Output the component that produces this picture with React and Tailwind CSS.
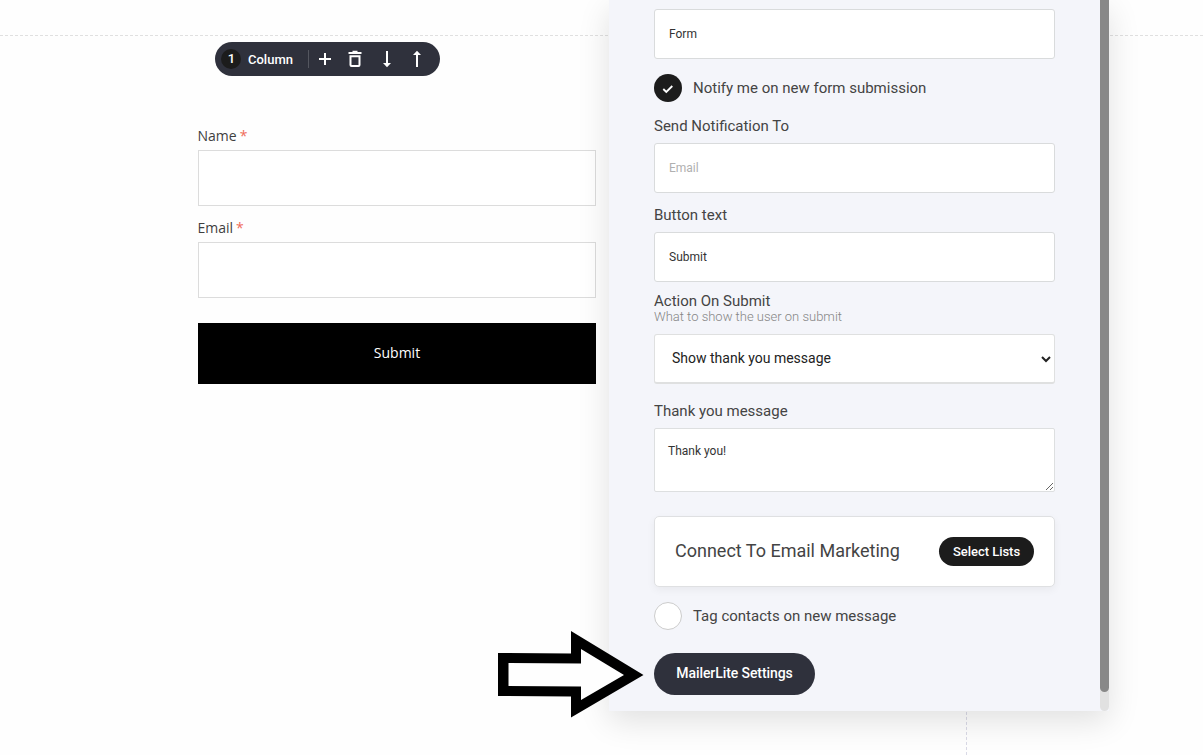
import React from "react";

function AddIcon() {
  return (
    <svg viewBox="0 0 22 22" className="size-[22px] shrink-0" fill="none" stroke="currentColor" strokeWidth="2">
      <path d="M11 5v12M5 11h12" />
    </svg>
  );
}

function TrashIcon() {
  return (
    <svg viewBox="0 0 22 22" className="size-[22px] shrink-0" fill="none" stroke="currentColor" strokeWidth="2">
      <path d="M4.500 5h13M8.500 3.800h5" />
      <path d="M6.500 8.200h9v8.800a1 1 0 0 1-1 1h-7a1 1 0 0 1-1-1z" />
    </svg>
  );
}

function ArrowIcon({ up }) {
  return (
    <svg
      viewBox="0 0 22 22"
      className={up ? "size-[22px] shrink-0 rotate-180" : "ml-0.5 size-[22px] shrink-0"}
      fill="currentColor"
    >
      <path d="M10 3h2v12h3l-4 4.300-4-4.300h3z" />
    </svg>
  );
}

function ColumnToolbar() {
  return (
    <div className="ml-[16.500px] flex h-[34px] w-[225px] items-center rounded-full bg-[#2f313c] pl-[6.500px] font-[Roboto,sans-serif] text-white">
      <span className="flex size-5 items-center justify-center rounded-full bg-[#1c1c1c] pb-px pl-px text-[13px] font-medium">1</span>
      <span className="ml-[7px] w-[60px] pt-px text-[13px] font-medium">Column</span>
      <span className="h-[18px] w-px bg-[#54565f]" />
      <div className="ml-[5px] flex items-center gap-2">
        <AddIcon />
        <TrashIcon />
        <ArrowIcon />
        <ArrowIcon up />
      </div>
    </div>
  );
}

function FormField({ label }) {
  return (
    <label className="block h-[92px] text-sm leading-[19px] text-[#3f3f3f]">
      <span className="-ml-[0.500px] flex h-6 gap-[3px]">
        {label} <span className="text-[#ef6b5a]">*</span>
      </span>
      <input className="block h-14 w-full border border-[#dcdcdc] bg-white px-4 outline-none" />
    </label>
  );
}

function Canvas() {
  return (
    <div className="flex h-full flex-col">
      <div className="h-9 w-full border-b border-dashed border-[#e0e0e0]" />
      <div className="flex flex-1">
        <div className="w-[967px] border-r border-dashed border-[#d9d9e6] pl-[198px]">
          <div className="w-[398px] pt-1.5 font-['Open_Sans',sans-serif]">
            <ColumnToolbar />
            <div className="mt-[50px]">
              <FormField label="Name" />
              <FormField label="Email" />
            </div>
            <button className="mt-[13px] h-[61px] w-full bg-black pb-0.5 text-sm text-white">Submit</button>
          </div>
        </div>
      </div>
    </div>
  );
}

function Label({ className = "", children }) {
  return <div className={`text-[15px] leading-5 text-[#444] ${className}`}>{children}</div>;
}

const inputStyle =
  "block h-[50px] w-full rounded-[3px] border border-[#d9dbdc] bg-white px-[14px] text-xs text-[#333] placeholder:text-[#b0b0b0] outline-none";

function SettingsPanel() {
  return (
    <aside className="absolute top-0 left-[609px] flex h-[711px] w-[500px] bg-[#f4f5fa] font-[Roboto,sans-serif] shadow-[0_10px_30px_rgba(0,0,0,0.12)]">
      <div className="w-[491px] pt-[9px] pr-[45px] pl-[45px]">
        <input className={inputStyle} defaultValue="Form" />
        <div className="mt-[15px] flex h-7 items-center gap-[11px]">
          <span className="flex size-7 items-center justify-center rounded-full bg-[#1c1c1c] text-white">
            <svg viewBox="0 0 12 10" className="mt-px h-[10px] w-3" fill="none" stroke="currentColor" strokeWidth="1.800">
              <path d="M1.300 5l3 3 6-6" />
            </svg>
          </span>
          <Label>Notify me on new form submission</Label>
        </div>
        <Label className="mt-[14px]">Send Notification To</Label>
        <input className={`${inputStyle} mt-[7px]`} placeholder="Email" />
        <Label className="mt-3">Button text</Label>
        <input className={`${inputStyle} mt-[7px]`} defaultValue="Submit" />
        <Label className="mt-[9px]">Action On Submit</Label>
        <div className="-mt-[2px] text-[13px] leading-4 font-light text-[#858585]">What to show the user on submit</div>
        <select className="mt-[9px] block h-[50px] w-full rounded-[3px] border border-b-2 border-[#dfe0e0] bg-white pr-px pb-px pl-[13px] text-sm text-[#222] outline-none">
          <option>Show thank you message</option>
        </select>
        <Label className="mt-[17px]">Thank you message</Label>
        <textarea
          className="mt-[7px] block h-16 w-full rounded-[2px] border border-[#dddfe0] bg-white px-[13px] pt-[14px] text-xs text-[#333] outline-none"
          defaultValue="Thank you!"
        />
        <div className="mt-6 flex h-[71px] items-center justify-between rounded-[5px] border border-[#dfe0e2] bg-white px-5 shadow-[0_3px_8px_rgba(0,0,0,0.05)]">
          <span className="pb-0.5 text-lg text-[#444]">Connect To Email Marketing</span>
          <button className="h-[29px] w-[95px] rounded-full bg-[#1c1c1c] text-[13px] font-medium tracking-[-0.030px] text-white">
            Select Lists
          </button>
        </div>
        <div className="mt-[15px] flex h-7 items-center gap-[11px]">
          <span className="size-7 rounded-full border border-[#ccc] bg-white" />
          <Label>Tag contacts on new message</Label>
        </div>
        <button className="mt-[23px] block h-[42px] w-[161px] rounded-full bg-[#2f313c] pb-0.5 text-sm font-medium tracking-[-0.080px] text-white">
          MailerLite Settings
        </button>
      </div>
      <div className="h-full w-[9px] rounded-b-full bg-[#e1e1e1]">
        <div className="h-[692px] rounded-b-full bg-[#888]" />
      </div>
    </aside>
  );
}

function PointerArrow() {
  return (
    <svg viewBox="0 0 146 88" className="absolute top-[630px] left-[498px] h-[88px] w-[146px]">
      <path d="M0 23L73 23.500V1L145.500 45L73 87.500V66.500L0 66Z" fill="#000" />
      <path d="M10.500 33L83 33.500V19L126 45L83 70V56.500L10.500 56Z" fill="#fefefe" />
    </svg>
  );
}

export default function App() {
  return (
    <div className="relative h-[755px] w-[1203px] overflow-hidden bg-[#fefefe]">
      <Canvas />
      <SettingsPanel />
      <PointerArrow />
    </div>
  );
}
